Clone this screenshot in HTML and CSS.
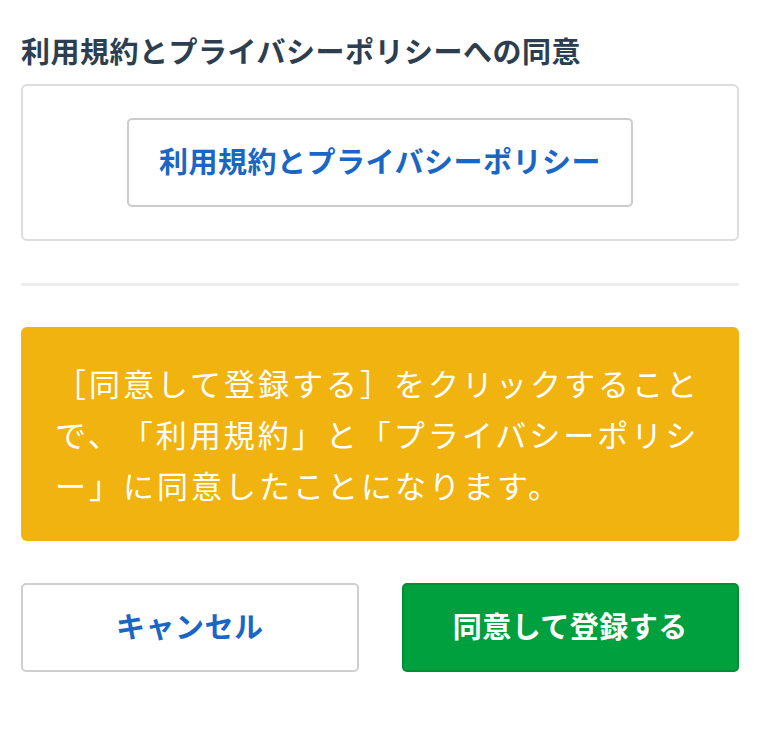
FILE: index.html
```html
<!DOCTYPE html>
<html lang="ja">
<head>
<meta charset="utf-8">
<link rel="stylesheet" href="styles.css">
</head>
<body>
<main class="page">
  <h2 class="title">利用規約とプライバシーポリシーへの同意</h2>
  <div class="policy-box">
    <button class="policy-btn" type="button">利用規約とプライバシーポリシー</button>
  </div>
  <hr class="divider">
  <div class="notice">［同意して登録する］をクリックすることで、「利用規約」と「プライバシーポリシー」に同意したことになります。</div>
  <div class="actions">
    <button class="btn btn-cancel" type="button">キャンセル</button>
    <button class="btn btn-agree" type="button">同意して登録する</button>
  </div>
</main>
</body>
</html>
```

FILE: styles.css
```css
html, body {
  margin: 0;
  padding: 0;
  background: #fff;
}
body {
  font-family: "Noto Sans CJK JP", "Noto Sans", sans-serif;
}
.page {
  padding: 28px 21px 0;
}
.title {
  margin: 0;
  font-size: 29px;
  letter-spacing: 0.5px;
  line-height: 44px;
  font-weight: 700;
  color: #2c3e50;
}
.policy-box {
  margin-top: 12px;
  height: 157px;
  box-sizing: border-box;
  border: 2px solid #dedede;
  border-radius: 6px;
  display: flex;
  align-items: center;
  justify-content: center;
}
.policy-btn {
  width: 506px;
  height: 89px;
  background: #fff;
  border: 2px solid #cccccc;
  border-radius: 5px;
  font-family: inherit;
  font-size: 29px;
  letter-spacing: 0.5px;
  font-weight: 700;
  color: #1a66c4;
  padding: 0 0 5px;
}
.divider {
  margin: 42px 0 0;
  border: 0;
  height: 3px;
  background: #eeeeee;
}
.notice {
  margin-top: 41px;
  background: #f0b30f;
  border-radius: 6px;
  padding: 30px 34px 31px;
  color: #fff;
  font-size: 31px;
  letter-spacing: 3px;
  line-height: 51px;
  text-spacing-trim: space-all;
}
.actions {
  margin-top: 42px;
  display: flex;
  gap: 43px;
}
.btn {
  flex: 1;
  height: 89px;
  border-radius: 5px;
  font-family: inherit;
  font-size: 29px;
  letter-spacing: 0.5px;
  font-weight: 700;
  padding: 0 0 5px;
}
.btn-cancel {
  background: #fff;
  border: 2px solid #cfcfcf;
  color: #1a66c4;
}
.btn-agree {
  background: #00a03e;
  border: 2px solid #008c33;
  color: #fff;
}
```
